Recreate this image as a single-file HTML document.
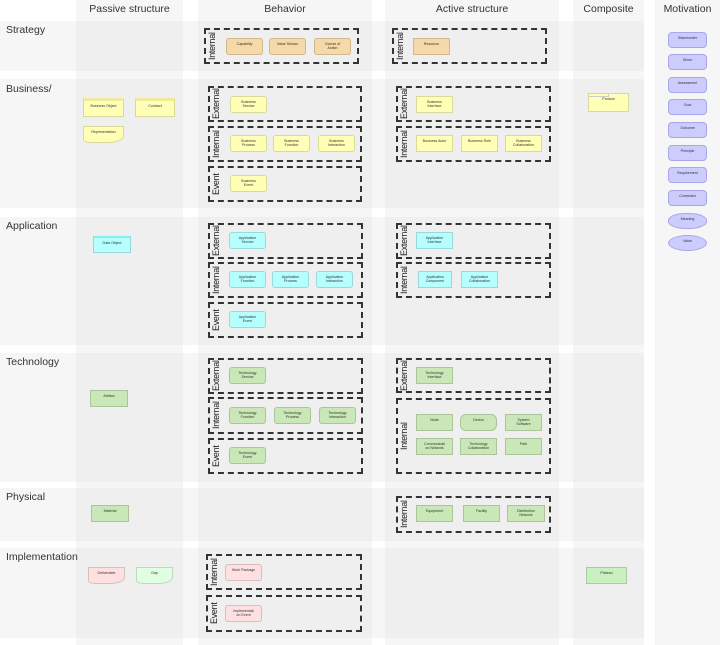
<!DOCTYPE html>
<html><head><meta charset="utf-8"><style>
*{margin:0;padding:0;box-sizing:border-box}
body{width:720px;height:645px;position:relative;background:#fff;font-family:"Liberation Sans",sans-serif;overflow:hidden;color:#333}
div{position:absolute}
.col{background:#f6f6f6;top:0;bottom:0}
.row{background:#f6f6f6;left:0;width:644px}
.x{background:#efefef}
.h{font-size:10.5px;top:3px;text-align:center;color:#333}
.rl{font-size:10.5px;left:6px;color:#333}
.d{border:2px dashed #333}
.v{writing-mode:vertical-rl;transform:rotate(180deg);font-size:9px;letter-spacing:-0.3px;left:1px;top:0;bottom:0;text-align:center;color:#222;white-space:nowrap}
.e{width:37px;height:17px;border:1px solid rgba(0,0,0,.15);border-radius:3px;font-size:3.6px;text-align:center;padding-top:3px;line-height:4px;color:#333}
.s{background:#f5d9a8}.b{background:#ffffb5}.a{background:#b5ffff}.t{background:#c9e7b7}.i{background:#ffe0e0}.g{background:#e0ffe0}.m{background:#ccccff;border:1px solid #a8a8e8;border-radius:4px;width:39px;height:16px}
.sq{border-radius:0}
</style></head><body>
<div class="col" style="left:76px;width:107px"></div>
<div class="col" style="left:198px;width:174px"></div>
<div class="col" style="left:385px;width:174px"></div>
<div class="col" style="left:573px;width:71px"></div>
<div class="col" style="left:655px;width:65px"></div>
<div class="row" style="top:21px;height:50px"></div>
<div class="row" style="top:79px;height:129px"></div>
<div class="row" style="top:217px;height:128px"></div>
<div class="row" style="top:353px;height:129px"></div>
<div class="row" style="top:488px;height:53px"></div>
<div class="row" style="top:548px;height:90px"></div>
<div class="x" style="left:76px;width:107px;top:21px;height:50px"></div>
<div class="x" style="left:198px;width:174px;top:21px;height:50px"></div>
<div class="x" style="left:385px;width:174px;top:21px;height:50px"></div>
<div class="x" style="left:573px;width:71px;top:21px;height:50px"></div>
<div class="x" style="left:76px;width:107px;top:79px;height:129px"></div>
<div class="x" style="left:198px;width:174px;top:79px;height:129px"></div>
<div class="x" style="left:385px;width:174px;top:79px;height:129px"></div>
<div class="x" style="left:573px;width:71px;top:79px;height:129px"></div>
<div class="x" style="left:76px;width:107px;top:217px;height:128px"></div>
<div class="x" style="left:198px;width:174px;top:217px;height:128px"></div>
<div class="x" style="left:385px;width:174px;top:217px;height:128px"></div>
<div class="x" style="left:573px;width:71px;top:217px;height:128px"></div>
<div class="x" style="left:76px;width:107px;top:353px;height:129px"></div>
<div class="x" style="left:198px;width:174px;top:353px;height:129px"></div>
<div class="x" style="left:385px;width:174px;top:353px;height:129px"></div>
<div class="x" style="left:573px;width:71px;top:353px;height:129px"></div>
<div class="x" style="left:76px;width:107px;top:488px;height:53px"></div>
<div class="x" style="left:198px;width:174px;top:488px;height:53px"></div>
<div class="x" style="left:385px;width:174px;top:488px;height:53px"></div>
<div class="x" style="left:573px;width:71px;top:488px;height:53px"></div>
<div class="x" style="left:76px;width:107px;top:548px;height:90px"></div>
<div class="x" style="left:198px;width:174px;top:548px;height:90px"></div>
<div class="x" style="left:385px;width:174px;top:548px;height:90px"></div>
<div class="x" style="left:573px;width:71px;top:548px;height:90px"></div>

<div class="h" style="left:76px;width:107px">Passive structure</div>
<div class="h" style="left:198px;width:174px">Behavior</div>
<div class="h" style="left:385px;width:174px">Active structure</div>
<div class="h" style="left:573px;width:71px">Composite</div>
<div class="h" style="left:655px;width:65px">Motivation</div>

<div class="rl" style="top:24px">Strategy</div>
<div class="rl" style="top:83px">Business/</div>
<div class="rl" style="top:220px">Application</div>
<div class="rl" style="top:356px">Technology</div>
<div class="rl" style="top:491px">Physical</div>
<div class="rl" style="top:551px">Implementation</div>

<div class="d" style="left:204px;top:28px;width:155px;height:36px"><div class="v">Internal</div></div>
<div class="d" style="left:392px;top:28px;width:155px;height:36px"><div class="v">Internal</div></div>
<div class="d" style="left:208px;top:86px;width:154px;height:36px"><div class="v">External</div></div>
<div class="d" style="left:208px;top:126px;width:154px;height:36px"><div class="v">Internal</div></div>
<div class="d" style="left:208px;top:166px;width:154px;height:36px"><div class="v">Event</div></div>
<div class="d" style="left:396px;top:86px;width:155px;height:36px"><div class="v">External</div></div>
<div class="d" style="left:396px;top:126px;width:155px;height:36px"><div class="v">Internal</div></div>
<div class="d" style="left:208px;top:223px;width:155px;height:36px"><div class="v">External</div></div>
<div class="d" style="left:208px;top:262px;width:155px;height:36px"><div class="v">Internal</div></div>
<div class="d" style="left:208px;top:302px;width:155px;height:36px"><div class="v">Event</div></div>
<div class="d" style="left:396px;top:223px;width:155px;height:36px"><div class="v">External</div></div>
<div class="d" style="left:396px;top:262px;width:155px;height:36px"><div class="v">Internal</div></div>
<div class="d" style="left:208px;top:358px;width:155px;height:36px"><div class="v">External</div></div>
<div class="d" style="left:208px;top:397px;width:155px;height:37px"><div class="v">Internal</div></div>
<div class="d" style="left:208px;top:438px;width:155px;height:36px"><div class="v">Event</div></div>
<div class="d" style="left:396px;top:358px;width:155px;height:35px"><div class="v">External</div></div>
<div class="d" style="left:396px;top:398px;width:155px;height:76px"><div class="v">Internal</div></div>
<div class="d" style="left:396px;top:496px;width:155px;height:37px"><div class="v">Internal</div></div>
<div class="d" style="left:206px;top:554px;width:156px;height:36px"><div class="v">Internal</div></div>
<div class="d" style="left:206px;top:595px;width:156px;height:37px"><div class="v">Event</div></div>

<div class="e s" style="left:226px;top:38px">Capability</div>
<div class="e s" style="left:269px;top:38px">Value Stream</div>
<div class="e s" style="left:314px;top:38px">Course of<br>Action</div>
<div class="e s sq" style="left:413px;top:38px">Resource</div>
<div class="e b sq" style="left:83px;top:98px;width:41px;height:19px;border-top:3px solid #ecec9a">Business Object</div>
<div class="e b sq" style="left:135px;top:98px;width:40px;height:19px;border-top:3px solid #ecec9a">Contract</div>
<div class="e b sq" style="left:83px;top:126px;width:41px;height:17px;border-radius:0 0 40% 20%">Representation</div>
<div class="e b" style="left:230px;top:96px">Business<br>Service</div>
<div class="e b" style="left:230px;top:135px">Business<br>Process</div>
<div class="e b" style="left:273px;top:135px">Business<br>Function</div>
<div class="e b" style="left:318px;top:135px">Business<br>Interaction</div>
<div class="e b" style="left:230px;top:175px">Business<br>Event</div>
<div class="e b sq" style="left:416px;top:96px">Business<br>Interface</div>
<div class="e b sq" style="left:416px;top:135px">Business Actor</div>
<div class="e b sq" style="left:461px;top:135px">Business Role</div>
<div class="e b sq" style="left:505px;top:135px">Business<br>Collaboration</div>
<div class="e b sq" style="left:588px;top:93px;width:41px;height:19px;padding-top:0">
<div style="left:0;top:0;width:20px;height:3px;border-right:1px solid #ccc;border-bottom:1px solid #ccc"></div>
<div style="left:0;right:0;top:3px;text-align:center">Product</div></div>
<div class="e m" style="left:668px;top:32px">Stakeholder</div>
<div class="e m" style="left:668px;top:54px">Driver</div>
<div class="e m" style="left:668px;top:77px">Assessment</div>
<div class="e m" style="left:668px;top:99px">Goal</div>
<div class="e m" style="left:668px;top:122px">Outcome</div>
<div class="e m" style="left:668px;top:145px">Principle</div>
<div class="e m" style="left:668px;top:167px">Requirement</div>
<div class="e m" style="left:668px;top:190px">Constraint</div>
<div class="e m" style="left:668px;top:213px;border-radius:45%">Meaning</div>
<div class="e m" style="left:668px;top:235px;border-radius:50%">Value</div>
<div class="e a sq" style="left:93px;top:236px;width:38px;border-top:2px solid #8ee">Data Object</div>
<div class="e a" style="left:229px;top:232px">Application<br>Service</div>
<div class="e a" style="left:229px;top:271px">Application<br>Function</div>
<div class="e a" style="left:272px;top:271px">Application<br>Process</div>
<div class="e a" style="left:316px;top:271px">Application<br>Interaction</div>
<div class="e a" style="left:229px;top:311px">Application<br>Event</div>
<div class="e a sq" style="left:416px;top:232px">Application<br>Interface</div>
<div class="e a sq" style="left:418px;top:271px;width:34px">Application<br>Component</div>
<div class="e a sq" style="left:461px;top:271px">Application<br>Collaboration</div>
<div class="e t sq" style="left:90px;top:390px;width:38px">Artifact</div>
<div class="e t" style="left:229px;top:367px">Technology<br>Service</div>
<div class="e t" style="left:229px;top:407px">Technology<br>Function</div>
<div class="e t" style="left:274px;top:407px">Technology<br>Process</div>
<div class="e t" style="left:319px;top:407px">Technology<br>Interaction</div>
<div class="e t" style="left:229px;top:447px">Technology<br>Event</div>
<div class="e t sq" style="left:416px;top:367px">Technology<br>Interface</div>
<div class="e t sq" style="left:416px;top:414px">Node</div>
<div class="e t" style="left:460px;top:414px;border-radius:6px">Device</div>
<div class="e t sq" style="left:505px;top:414px">System<br>Software</div>
<div class="e t sq" style="left:416px;top:438px">Communicati<br>on Network</div>
<div class="e t sq" style="left:460px;top:438px">Technology<br>Collaboration</div>
<div class="e t sq" style="left:505px;top:438px">Path</div>
<div class="e t sq" style="left:91px;top:505px;width:38px">Material</div>
<div class="e t sq" style="left:416px;top:505px">Equipment</div>
<div class="e t sq" style="left:463px;top:505px">Facility</div>
<div class="e t sq" style="left:507px;top:505px;width:38px">Distribution<br>Network</div>
<div class="e i sq" style="left:88px;top:567px;border-radius:0 0 40% 20%">Deliverable</div>
<div class="e g sq" style="left:136px;top:567px;border-radius:0 0 40% 20%">Gap</div>
<div class="e i" style="left:225px;top:564px">Work Package</div>
<div class="e i" style="left:225px;top:605px">Implementati<br>on Event</div>
<div class="e g sq" style="left:586px;top:567px;width:41px;background:#c9f0c0">Plateau</div>
</body></html>
